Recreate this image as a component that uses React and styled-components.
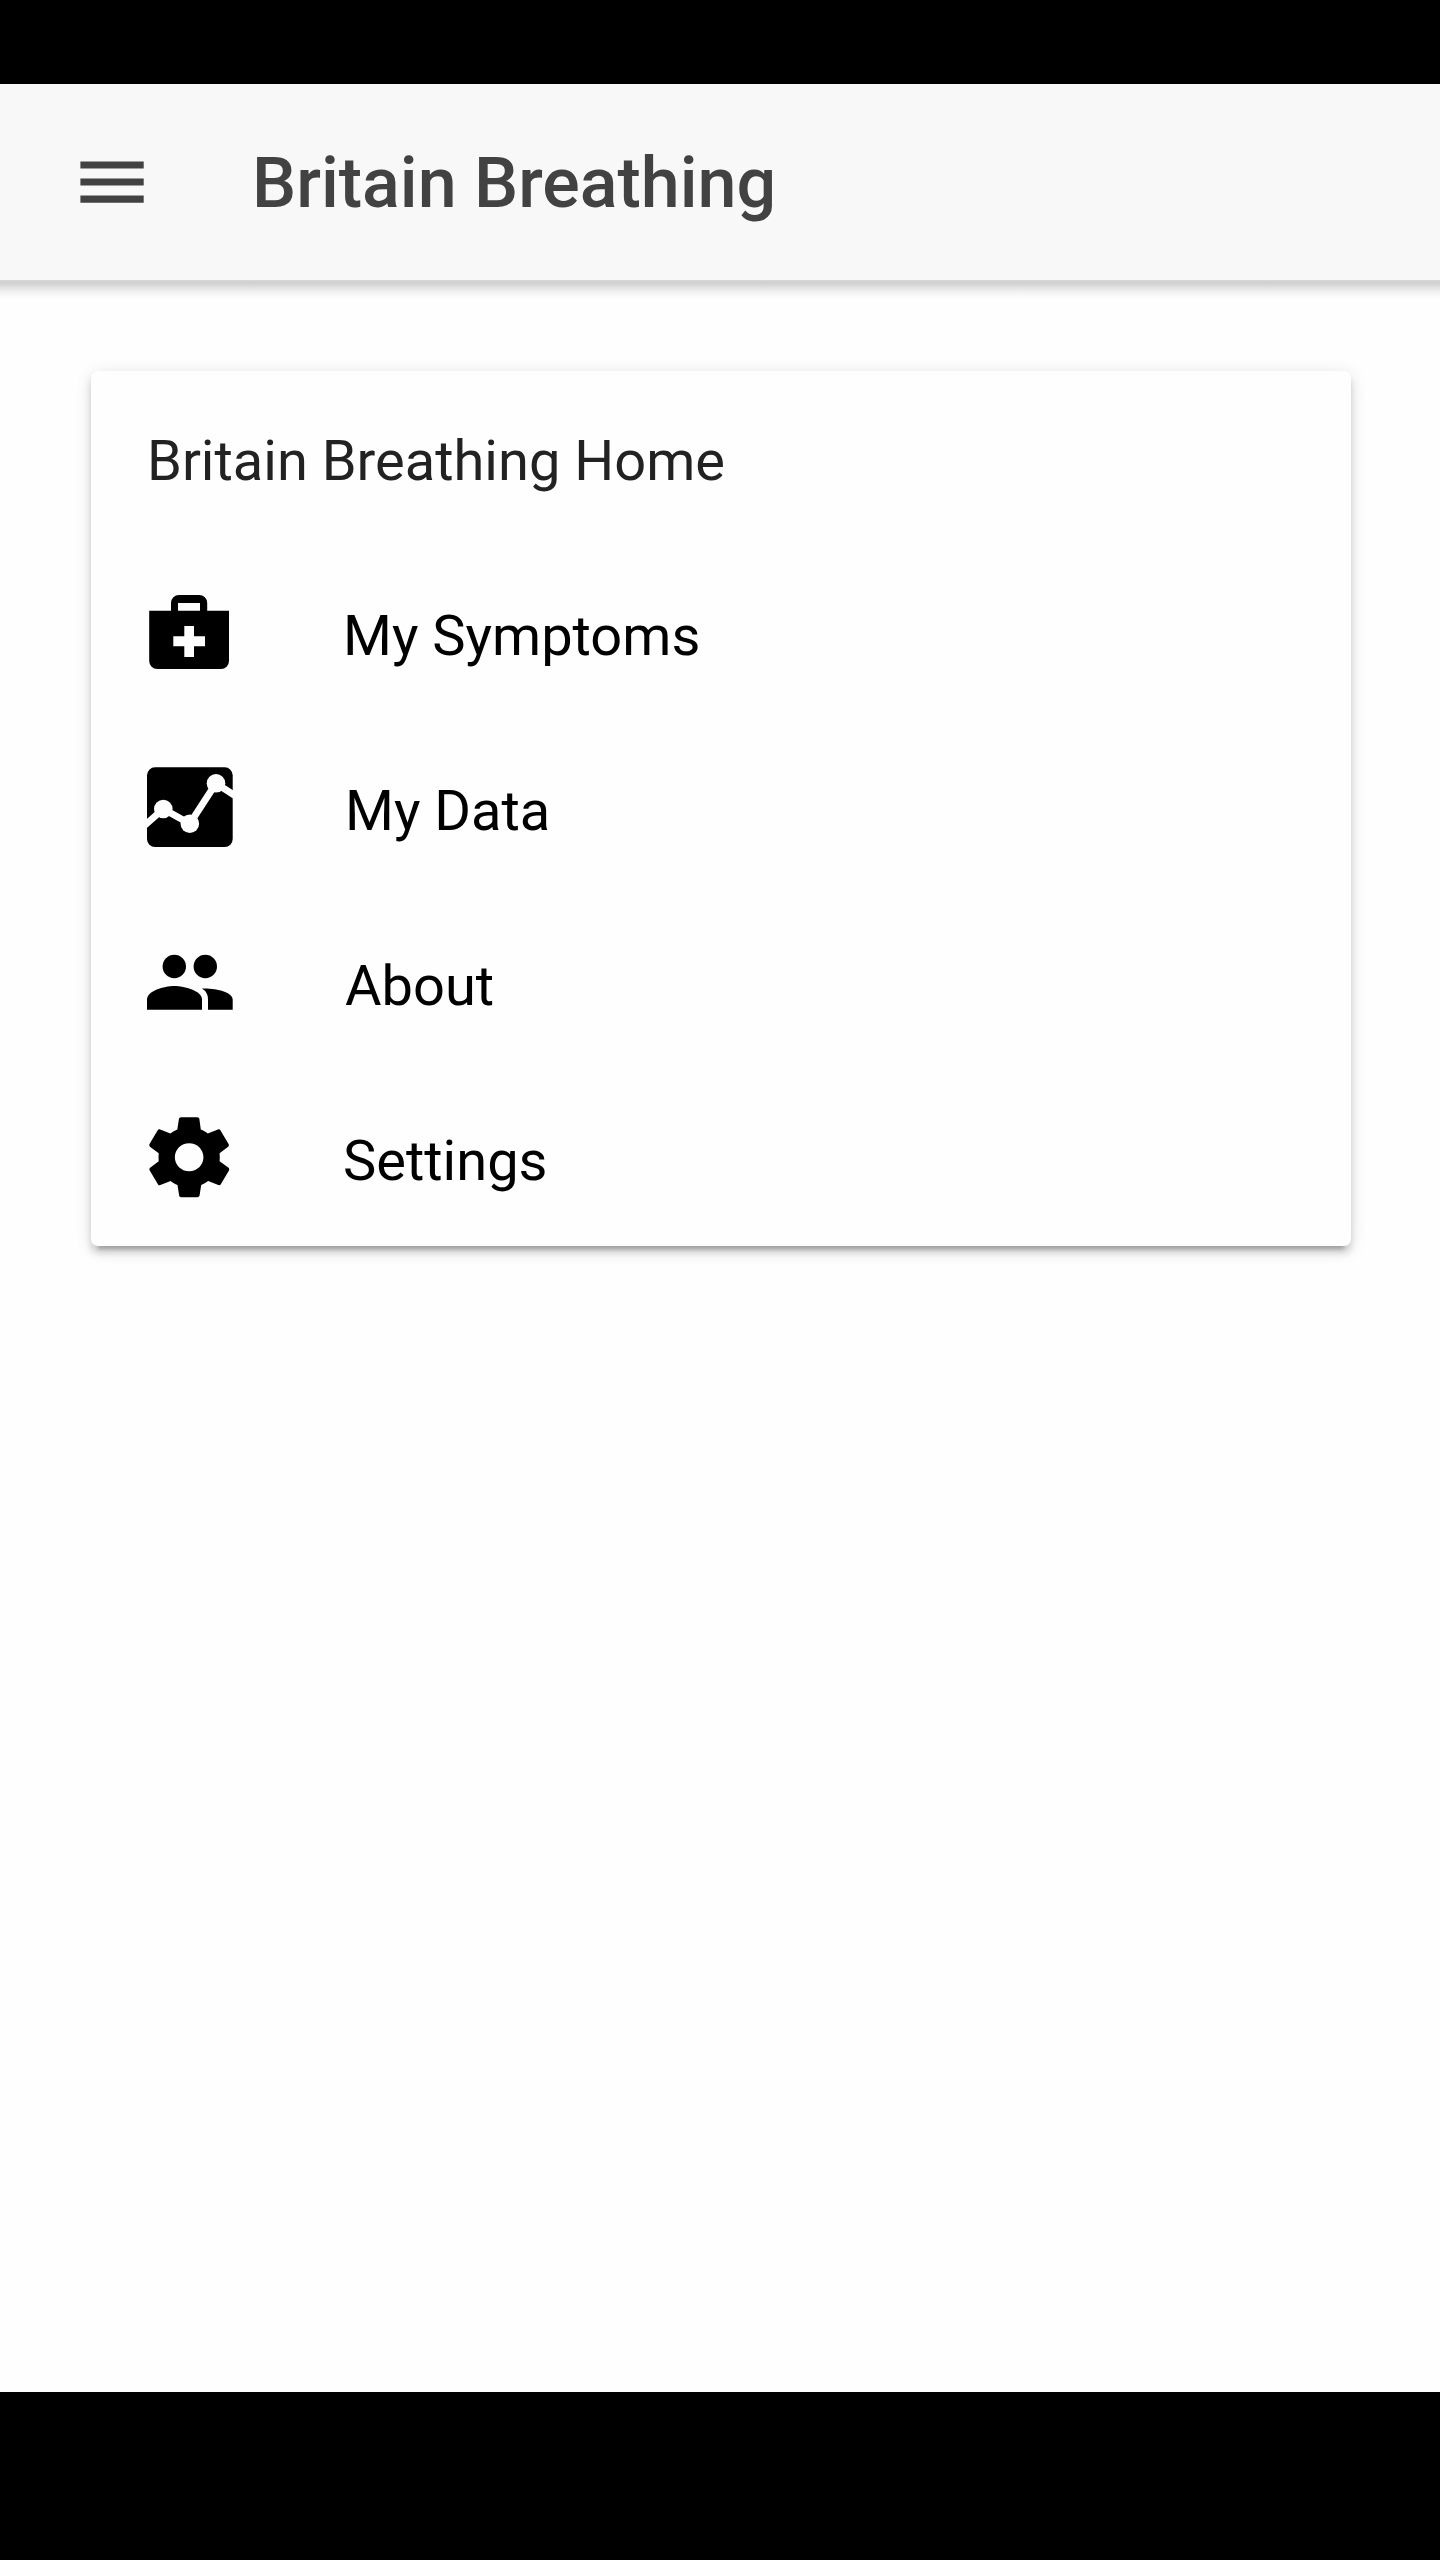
import React from "react";
import styled, { createGlobalStyle } from "styled-components";

const GlobalStyle = createGlobalStyle`
  * { box-sizing: border-box; }
  body { margin: 0; background: #fff; }
`;

const Screen = styled.div`
  width: 1440px;
  height: 2560px;
  display: flex;
  flex-direction: column;
  background: #fefefe;
  font-family: Roboto, sans-serif;
  color: #000;
`;

const SystemBar = styled.div`
  flex: none;
  height: ${(p) => p.$height}px;
  background: #000;
`;

const Toolbar = styled.header`
  flex: none;
  height: 196px;
  display: flex;
  align-items: center;
  padding-left: 80px;
  background: #f8f8f8;
`;

const ToolbarShadow = styled.div`
  flex: none;
  height: 19px;
  background: linear-gradient(#d8d8d8 0, #d0d0d0 2px, #d7d7d7 5px, #e8e8e8 9px, #f6f6f6 14px, #fefefe 19px);
`;

const MenuButton = styled.button`
  display: flex;
  padding: 0;
  border: 0;
  background: none;
`;

const Title = styled.h1`
  margin: 0 0 0 108px;
  padding-top: 2px;
  font-size: 70px;
  font-weight: 500;
  line-height: 84px;
  color: #424242;
`;

const Content = styled.main`
  flex: 1;
  padding: 72px 89px 0 91px;
`;

const Card = styled.section`
  border-radius: 7px;
  background: #fefefe;
  box-shadow:
    0 7px 7px rgba(0, 0, 0, 0.14),
    0 10.5px 3.5px -7px rgba(0, 0, 0, 0.2),
    0 3.5px 17.5px rgba(0, 0, 0, 0.12);
`;

const CardHeader = styled.h2`
  margin: 0;
  height: 175px;
  padding: 57px 56px 0;
  font-size: 56px;
  font-weight: 400;
  line-height: 66px;
  color: #222;
`;

const Item = styled.a`
  display: flex;
  align-items: flex-start;
  height: 175px;
  padding-left: 55px;
`;

const ItemIcon = styled.svg`
  flex: none;
  width: 90px;
  height: 90px;
  margin-top: 43px;
`;

const Label = styled.span`
  margin: 57px 0 0 ${(p) => p.$gap}px;
  font-size: 56px;
  line-height: 66px;
`;

const MenuIcon = () => (
  <svg width="64" height="44" viewBox="0 0 64 44" fill="#424242">
    <path d="M.4 1.4H63.7V8.5H.4zM.4 18.5H63.7V25.6H.4zM.4 35.6H63.7V42.7H.4z" />
  </svg>
);

const MedkitIcon = () => (
  <path
    fillRule="evenodd"
    d="M25 21.7V14a8 8 0 0 1 8-8H53.2a8 8 0 0 1 8 8V21.7H83V72a8 8 0 0 1-8 8H11.2a8 8 0 0 1-8-8V21.7zM32 14V21.7H54V14zM38.3 37V47.3H27.3V57.2H38.3V68H48V57.2H59V47.3H48V37z"
  />
);

const AnalyticsIcon = () => (
  <>
    <rect x="1" y="3.3" width="85.7" height="79.7" rx="8" />
    <path d="M-2 62L17.3 45 43.8 59.7 70 19.3 90 32.3" fill="none" stroke="#fefefe" strokeWidth="6.8" />
    <g fill="#fefefe">
      <circle cx="17.3" cy="45" r="9.3" />
      <circle cx="43.8" cy="59.7" r="9.3" />
      <circle cx="70" cy="19.3" r="9.3" />
    </g>
  </>
);

const PeopleIcon = () => (
  <>
    <circle cx="28.3" cy="27.5" r="11.7" />
    <circle cx="59.3" cy="27.5" r="11.7" />
    <path d="M1 70.7V60.5C1 52 18 47 28.3 47S56 52 56 60.5V70.7z" />
    <path d="M56 49.5C60.5 52.5 62 56 62 60.5V70.7H86.7V60.5C86.7 53.5 71 49 56 49.5z" />
  </>
);

const SettingsIcon = () => (
  <path
    transform="translate(-5.9 -5.9) scale(.192)"
    d="M413.967 276.8c1.06-6.235 1.06-13.518 1.06-20.8s-1.06-13.518-1.06-20.8l44.667-34.318c4.26-3.118 5.319-8.317 2.13-13.518L418.215 115.6c-2.129-4.164-8.507-6.235-12.767-4.164l-53.186 20.801c-10.638-8.318-23.394-15.601-36.16-20.801l-7.448-55.117c-1.06-4.154-5.319-8.318-10.638-8.318h-85.098c-5.318 0-9.577 4.164-10.637 8.318l-8.508 55.117c-12.767 5.2-24.464 12.482-36.171 20.801l-53.186-20.801c-5.319-2.071-10.638 0-12.767 4.164L49.1 187.365c-2.119 4.153-1.061 10.399 2.129 13.518L96.97 235.2c0 7.282-1.06 13.518-1.06 20.8s1.06 13.518 1.06 20.8l-44.668 34.318c-4.26 3.118-5.318 8.317-2.13 13.518L92.721 396.4c2.13 4.164 8.508 6.235 12.767 4.164l53.187-20.801c10.637 8.318 23.394 15.601 36.16 20.801l8.508 55.117c1.069 5.2 5.318 8.318 10.637 8.318h85.098c5.319 0 9.578-4.164 10.638-8.318l8.518-55.117c12.757-5.2 24.464-12.482 36.16-20.801l53.187 20.801c5.318 2.071 10.637 0 12.767-4.164l42.549-71.765c2.129-4.153 1.06-10.399-2.13-13.518l-46.8-34.317zm-158.499 52c-41.489 0-74.46-32.235-74.46-72.8s32.971-72.8 74.46-72.8 74.461 32.235 74.461 72.8-32.972 72.8-74.461 72.8z"
  />
);

const items = [
  { label: "My Symptoms", Icon: MedkitIcon, gap: 107 },
  { label: "My Data", Icon: AnalyticsIcon, gap: 109 },
  { label: "About", Icon: PeopleIcon, gap: 109 },
  { label: "Settings", Icon: SettingsIcon, gap: 107 },
];

export default function App() {
  return (
    <Screen>
      <GlobalStyle />
      <SystemBar $height={84} />
      <Toolbar>
        <MenuButton aria-label="Menu">
          <MenuIcon />
        </MenuButton>
        <Title>Britain Breathing</Title>
      </Toolbar>
      <ToolbarShadow />
      <Content>
        <Card>
          <CardHeader>Britain Breathing Home</CardHeader>
          {items.map(({ label, Icon, gap }) => (
            <Item key={label}>
              <ItemIcon viewBox="0 0 90 90">
                <Icon />
              </ItemIcon>
              <Label $gap={gap}>{label}</Label>
            </Item>
          ))}
        </Card>
      </Content>
      <SystemBar $height={168} />
    </Screen>
  );
}
